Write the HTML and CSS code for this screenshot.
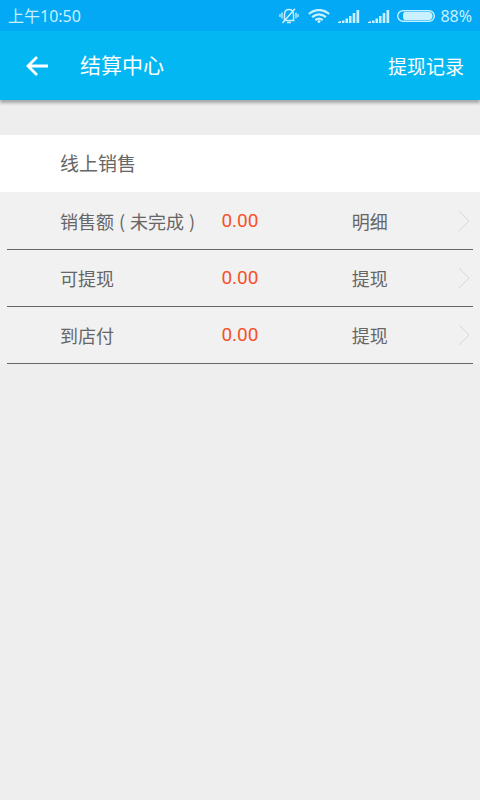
FILE: index.html
```html
<!DOCTYPE html>
<html lang="zh-CN">
<head>
<meta charset="utf-8">
<meta name="viewport" content="width=device-width, initial-scale=1">
<title>结算中心</title>
<link rel="stylesheet" href="styles.css">
</head>
<body>
<div class="status">
  <span class="time">上午10:50</span>
  <svg class="bell" width="20" height="16" viewBox="0 0 20 16" fill="none" stroke="currentColor" aria-hidden="true">
    <path d="M4.500 12.500H15.500M5.500 12V6.500C5.500 3.500 7.300 1.500 10 1.500S14.500 3.500 14.500 6.500V12M8 14.500H12M3.500 15L16 .7" stroke-width="1.500"/>
    <path d="M3 4.500V10.500M1 6V9M17 4.500V10.500M19 6V9" stroke-width="1.300"/>
  </svg>
  <svg class="wifi" width="22" height="14" viewBox="0 0 22 14" fill="none" stroke="currentColor" stroke-width="2.300" aria-hidden="true">
    <path d="M.8 5C7 -.3 15 -.3 21.200 5M4.100 8.200C8.300 4.600 13.700 4.600 17.900 8.200M7.300 11.200C9.600 9.200 12.400 9.200 14.700 11.200"/>
    <circle cx="11" cy="12.500" r="1.500" fill="currentColor" stroke="none"/>
  </svg>
  <svg class="signal" width="22" height="14" viewBox="0 0 22 14" fill="currentColor" aria-hidden="true">
    <path d="M0 14V13L3 12V14ZM4 11.500H6.500V14H4ZM7.500 9.500H10V14H7.500ZM11 7H13.500V14H11ZM14.700 4H17.300V14H14.700ZM18.500 1H21.200V14H18.500Z"/>
  </svg>
  <svg class="signal" width="22" height="14" viewBox="0 0 22 14" fill="currentColor" aria-hidden="true">
    <path d="M0 14V13L3 12V14ZM4 11.500H6.500V14H4ZM7.500 9.500H10V14H7.500ZM11 7H13.500V14H11ZM14.700 4H17.300V14H14.700ZM18.500 1H21.200V14H18.500Z"/>
  </svg>
  <svg class="battery" width="38" height="12" viewBox="0 0 38 12" fill="none" aria-hidden="true">
    <rect x=".7" y=".7" width="36.600" height="10.600" rx="5.300" stroke="currentColor" stroke-width="1.400"/>
    <path d="M8 2H32C34.500 2 35.500 4 35.500 6S34.500 10 32 10H8C6.500 10 6 8.500 6 6S6.500 2 8 2Z" fill="currentColor"/>
  </svg>
  <span class="percent">88%</span>
</div>
<header class="bar">
  <button class="back" type="button" aria-label="返回">
    <svg width="22" height="20" viewBox="0 0 22 20" fill="none" stroke="currentColor" stroke-width="2.800" aria-hidden="true">
      <path d="M22 10H2.500M11 1L2 10L11 19"/>
    </svg>
  </button>
  <h1 class="title">结算中心</h1>
  <a class="records" href="#records">提现记录</a>
</header>
<main>
  <h2 class="section">线上销售</h2>
  <ul class="list">
    <li><a class="row" href="#sales">
      <span>销售额<span class="paren">(</span>未完成<span class="paren">)</span></span>
      <span class="amount">0.00</span>
      <span>明细</span>
      <svg class="chevron" width="12" height="22" viewBox="0 0 12 22" aria-hidden="true"><path d="M1 1L11 11L1 21"/></svg>
    </a></li>
    <li><a class="row" href="#available">
      <span>可提现</span>
      <span class="amount">0.00</span>
      <span>提现</span>
      <svg class="chevron" width="12" height="22" viewBox="0 0 12 22" aria-hidden="true"><path d="M1 1L11 11L1 21"/></svg>
    </a></li>
    <li><a class="row" href="#store">
      <span>到店付</span>
      <span class="amount">0.00</span>
      <span>提现</span>
      <svg class="chevron" width="12" height="22" viewBox="0 0 12 22" aria-hidden="true"><path d="M1 1L11 11L1 21"/></svg>
    </a></li>
  </ul>
</main>
</body>
</html>
```
FILE: styles.css
```css
* {
  box-sizing: border-box;
}

body {
  margin: 0;
  min-height: 100vh;
  background: #eeeeee;
  color: #666666;
  font-family: "Noto Sans CJK SC", sans-serif;
  font-size: 18px;
  line-height: 24px;
}

h1,
h2,
ul {
  margin: 0;
  padding: 0;
  font-weight: 400;
  list-style: none;
}

a {
  color: inherit;
  text-decoration: none;
}

.status {
  display: flex;
  align-items: center;
  height: 31px;
  padding: 0 8px;
  background: #03a9f4;
  color: #c8f0ff;
  font-family: "Noto Sans", "Noto Sans CJK SC", sans-serif;
  font-size: 16px;
}

.time {
  flex: 1;
}

.wifi {
  margin-left: 9px;
}

.signal {
  margin-left: 8px;
}

.battery {
  margin: 0 5px 0 7px;
}

.bar {
  display: flex;
  align-items: center;
  height: 69px;
  padding: 0 16px 0 26px;
  background: #03b8f2;
  box-shadow: 0 3px 3px rgba(0, 0, 0, 0.3);
  color: #ffffff;
}

.back {
  display: flex;
  padding: 0;
  border: 0;
  background: none;
  color: inherit;
}

.title {
  flex: 1;
  margin-left: 32px;
  font-family: Roboto, "Noto Sans CJK SC", sans-serif;
  font-size: 21px;
}

.records {
  font-size: 19px;
}

.section {
  margin-top: 35px;
  padding: 16px 60px 17px;
  background: #ffffff;
  font-size: 19px;
}

.list {
  padding: 1px 7px 0;
  background: #f1f1f1;
}

.row {
  display: grid;
  grid-template-columns: 161fr 130fr 106fr 12px;
  align-items: center;
  height: 57px;
  padding: 0 3px 0 53px;
  border-bottom: 1px solid #666666;
}

.paren {
  margin: 0 5px;
}

.amount {
  color: #f4512c;
  font-family: Roboto, sans-serif;
  font-size: 19px;
}

.chevron {
  fill: none;
  stroke: #d8d8d8;
}
```
